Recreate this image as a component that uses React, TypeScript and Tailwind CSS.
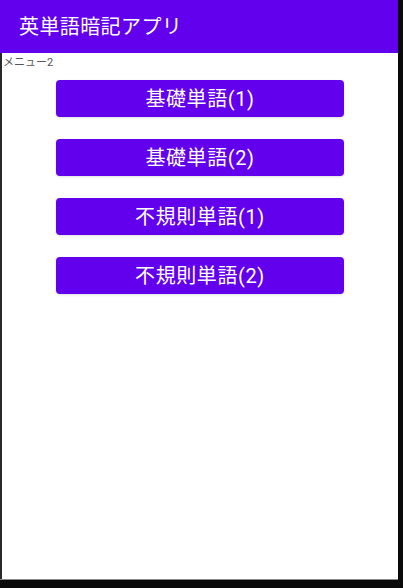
export default function App() {
  const items = ["基礎単語(1)", "基礎単語(2)", "不規則単語(1)", "不規則単語(2)"]

  return (
    <div className="w-[403px] h-[588px] bg-[#0a0a0a] flex flex-col font-['Roboto','Noto_Sans_CJK_JP',sans-serif]">
      <div className="w-[398px] h-[580px] bg-white flex flex-col border-b border-[#8a8a8a]">
        {/* App bar */}
        <header className="h-[53px] bg-[#6200ee] flex items-center pl-[19px] shrink-0">
          <h1 className="text-white text-[20px] leading-none tracking-[0.02em]">英単語暗記アプリ</h1>
        </header>

        <div className="flex-1 flex border-l-2 border-[#2a2a2a]">
          <div className="flex-1 flex flex-col">
            <p className="text-[11px] leading-none text-[#555] pl-px pt-[4px]">メニュー2</p>

            {/* Menu buttons */}
            <div className="flex flex-col items-center gap-[22px] pt-[12px]">
              {items.map((label) => (
                <button
                  key={label}
                  className="w-[288px] h-[37px] rounded-[4px] bg-[#6200ee] text-white text-[20px] leading-none tracking-[0.03em] shadow-sm"
                >
                  {label}
                </button>
              ))}
            </div>
          </div>
        </div>
      </div>
    </div>
  )
}
